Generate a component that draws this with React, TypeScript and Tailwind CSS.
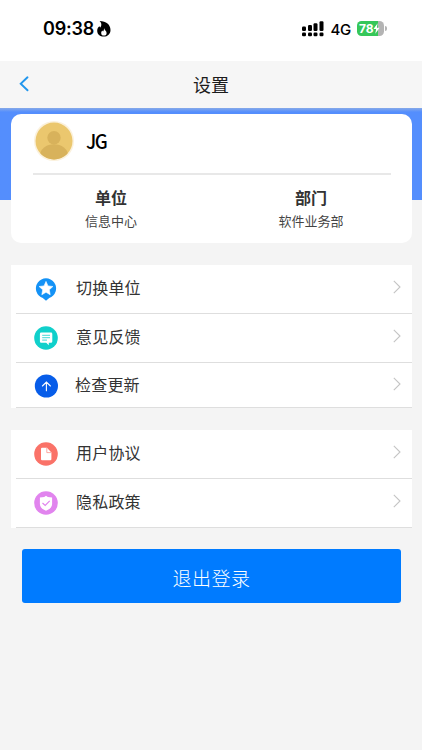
import React from 'react';

const StarPinIcon = () => (
  <svg width="24" height="24" viewBox="0 0 24 24">
    <path d="M12 23.7 L8.8 21 A10.1 10.1 0 1 1 15.2 21 Z" fill="#1492f6" />
    <path
      d="M12 4.4l2 4.5 4.9.6-3.6 3.3.9 4.9-4.2-2.4-4.2 2.4.9-4.9-3.6-3.3 4.9-.6z"
      fill="#fff"
      stroke="#fff"
      strokeWidth=".6"
      strokeLinejoin="round"
    />
  </svg>
);

const FeedbackIcon = () => (
  <svg width="24" height="24" viewBox="0 0 24 24">
    <circle cx="12" cy="12" r="11.8" fill="#10d0cb" />
    <path
      d="M7.2 6.6h9.8a1.3 1.3 0 0 1 1.3 1.3v7.6a1.3 1.3 0 0 1-1.3 1.3h-2.2v2.4l-2.6-2.4H7.2a1.3 1.3 0 0 1-1.3-1.3V7.9a1.3 1.3 0 0 1 1.3-1.3z"
      fill="#fff"
    />
    <path d="M8.2 9.3h7.8M8.2 11.7h7.8M8.2 14.1h4.8" stroke="#10d0cb" strokeWidth=".8" />
  </svg>
);

const UpdateIcon = () => (
  <svg width="24" height="24" viewBox="0 0 24 24">
    <circle cx="12.4" cy="12" r="11.6" fill="#075de9" />
    <path
      d="M12.4 16.8V8.3M8.4 12l4-4 4 4"
      fill="none"
      stroke="#fff"
      strokeWidth="1.1"
      strokeLinecap="round"
    />
  </svg>
);

const AgreementIcon = () => (
  <svg width="24" height="24" viewBox="0 0 24 24">
    <circle cx="12" cy="12" r="11.8" fill="#fa7268" />
    <path
      d="M8 5.8h5l4.4 4.6v6.8a1 1 0 0 1-1 1H8a1 1 0 0 1-1-1V6.8a1 1 0 0 1 1-1z"
      fill="#fff"
    />
    <path d="M12.8 6v4.6h4.5" fill="none" stroke="#fa7268" strokeWidth=".6" />
  </svg>
);

const PrivacyIcon = () => (
  <svg width="24" height="24" viewBox="0 0 24 24">
    <circle cx="12" cy="12" r="11.8" fill="#e184ee" />
    <path
      d="M12 4.7l1.8 1.3 4.3.6v6.3c0 3.1-2.3 5.2-6.1 6.8-3.8-1.6-6.1-3.7-6.1-6.8V6.6l4.3-.6z"
      fill="#fff"
    />
    <path d="M8.5 12l2.7 2.5 4.5-4.7" fill="none" stroke="#e184ee" strokeWidth="1.2" />
  </svg>
);

type Item = { label: string; icon: React.ReactNode; row: string; text?: string };

const accountItems: Item[] = [
  { label: '切换单位', icon: <StarPinIcon />, row: 'h-[49px] pb-px' },
  { label: '意见反馈', icon: <FeedbackIcon />, row: 'h-[49px] pb-px' },
  { label: '检查更新', icon: <UpdateIcon />, row: 'h-[45px] pt-px', text: '-ml-px' },
];

const legalItems: Item[] = [
  { label: '用户协议', icon: <AgreementIcon />, row: 'h-[49px] pb-px' },
  { label: '隐私政策', icon: <PrivacyIcon />, row: 'h-[49px] pb-px' },
];

const MenuGroup = ({ items }: { items: Item[] }) => (
  <ul className="mr-[10px] ml-[11px] bg-white">
    {items.map((item) => (
      <li
        key={item.label}
        className={`ml-[5px] flex items-center border-b border-[#dedede] pr-[11px] pl-[18px] ${item.row}`}
      >
        {item.icon}
        <span
          className={`flex-1 pb-[3px] pl-[18px] text-[16px] leading-6 tracking-[0.2px] text-[#333] ${item.text ?? ''}`}
        >
          {item.label}
        </span>
        <svg width="8" height="14" viewBox="0 0 8 14" className="mb-[3px]">
          <path d="M.8.8L7 7 .8 13.2" fill="none" stroke="#c4c4c4" strokeWidth="1.1" />
        </svg>
      </li>
    ))}
  </ul>
);

const StatusBar = () => (
  <div className="flex h-[61px] items-center justify-between bg-white pr-[35px] pb-[4px] pl-[43px]">
    <div className="flex items-center gap-[3px]">
      <span className="pt-px font-['Inter','Liberation_Sans',sans-serif] text-[18px] leading-none font-semibold tracking-[-0.2px] text-black">
        09:38
      </span>
      <svg width="14" height="16" viewBox="0 0 14 16">
        <path
          d="M2.6 0C9.2 0 13.5 3.800 13.5 9c0 4-2.900 6.600-6.700 6.600S.2 13.200.2 9.700c0-2.100.9-3.400 2.300-4.400.1.600.4 1 .9 1.300C4.900 4.300 4.700 1.800 2.600 0z"
          fill="#000"
        />
        <path
          d="M7 6.900c.2 1.900 2.600 2.900 2.600 5a2.700 2.700 0 0 1-5.400 0c0-1.200.6-1.900 1.200-2.400.1.500.3.800.7 1 .7-.9 1-2.100.9-3.600z"
          fill="#fff"
        />
      </svg>
    </div>
    <div className="flex items-center">
      <svg width="22" height="16" viewBox="0 0 22 16">
        <rect x="0" y="5.5" width="4" height="4.5" rx="1.2" />
        <rect x="6" y="4" width="4" height="6" rx="1.2" />
        <rect x="11.5" y="2.2" width="4" height="7.8" rx="1.2" />
        <rect x="17.5" y=".3" width="4" height="9.7" rx="1.2" />
        <rect x="0" y="11.5" width="4" height="3.8" rx="1.2" />
        <rect x="6" y="11.5" width="4" height="3.8" rx="1.2" />
        <rect x="11.5" y="11.5" width="4" height="3.8" rx="1.2" />
        <rect x="17.5" y="11.5" width="4" height="3.8" rx="1.2" />
      </svg>
      <span className="ml-[7px] pt-px font-['Inter','Liberation_Sans',sans-serif] text-[15px] leading-none font-medium tracking-[-0.3px] text-black">
        4G
      </span>
      <div className="ml-[6px] flex h-[15px] w-[27px] items-center overflow-hidden rounded-[4.5px] bg-linear-to-r from-[#35c759] from-78% to-[#b4b4b4] to-78% pl-[2px]">
        <span className="font-['Inter','Liberation_Sans',sans-serif] text-[12px] leading-[15px] font-bold tracking-[-0.1px] text-white">
          78
        </span>
        <svg width="7" height="11" viewBox="0 0 7 11">
          <path d="M4.6.3L.5 6h2.6l-.8 4.7L6.6 4.700H3.900z" fill="#fff" />
        </svg>
      </div>
      <span className="ml-px h-[5px] w-[2px] rounded-r-full bg-[#b4b4b4]" />
    </div>
  </div>
);

export default function App() {
  return (
    <div className="h-[750px] w-[422px] overflow-hidden bg-[#f4f4f4] font-['Noto_Sans_CJK_SC',sans-serif]">
      <StatusBar />

      <header className="grid h-[47px] grid-cols-[1fr_auto_1fr] items-center bg-[#f6f6f6] pb-[2px]">
        <svg width="10" height="16" viewBox="0 0 10 16" className="ml-[19px]">
          <path
            d="M8.5 1.3L1.7 7.8l6.8 6.5"
            fill="none"
            stroke="#2196ed"
            strokeWidth="1.9"
            strokeLinecap="round"
          />
        </svg>
        <h1 className="text-[18px] leading-6 text-[#1c1c1c]">设置</h1>
      </header>

      {/* the card hangs below the blue band */}
      <section className="h-[92px] bg-linear-to-b from-[#87a9e8] to-[#548efd] to-[4px] pt-[6px] pr-[10px] pl-[11px]">
        <div className="h-[129px] rounded-[10px] bg-white">
          <div className="flex h-[59px] items-center pb-[5px] pl-[23px]">
            <svg width="40" height="40" viewBox="0 0 40 40">
              <defs>
                <clipPath id="avatar">
                  <circle cx="20" cy="20" r="18.5" />
                </clipPath>
              </defs>
              <circle cx="20" cy="20" r="20" fill="#fbf1dc" />
              <g clipPath="url(#avatar)">
                <rect width="40" height="40" fill="#ebc76e" />
                <circle cx="20" cy="16.8" r="6.7" fill="#d8b25b" />
                <ellipse cx="20" cy="34.5" rx="14" ry="11.2" fill="#d8b25b" />
              </g>
            </svg>
            <span className="ml-[12px] origin-left scale-x-[0.93] text-[20px] leading-7 font-medium tracking-[-1.6px] text-black">
              JG
            </span>
          </div>
          <div className="mr-[21px] ml-[22px] h-[2px] bg-[#e8e8e8]" />
          <div className="grid grid-cols-2 pt-[10px] pr-px text-center">
            <div>
              <p className="text-[16px] leading-6 font-bold text-[#333]">单位</p>
              <p className="text-[13px] leading-6 text-[#444]">信息中心</p>
            </div>
            <div>
              <p className="text-[16px] leading-6 font-bold text-[#333]">部门</p>
              <p className="text-[13px] leading-6 text-[#444]">软件业务部</p>
            </div>
          </div>
        </div>
      </section>

      <main className="flex flex-col gap-[22px] pt-[65px]">
        <MenuGroup items={accountItems} />
        <MenuGroup items={legalItems} />
        <button className="-mt-px mr-[21px] ml-[22px] h-[54px] rounded-[3px] bg-[#007bff] pt-[4px] text-[19px] font-light tracking-[0.5px] text-white">
          退出登录
        </button>
      </main>
    </div>
  );
}
